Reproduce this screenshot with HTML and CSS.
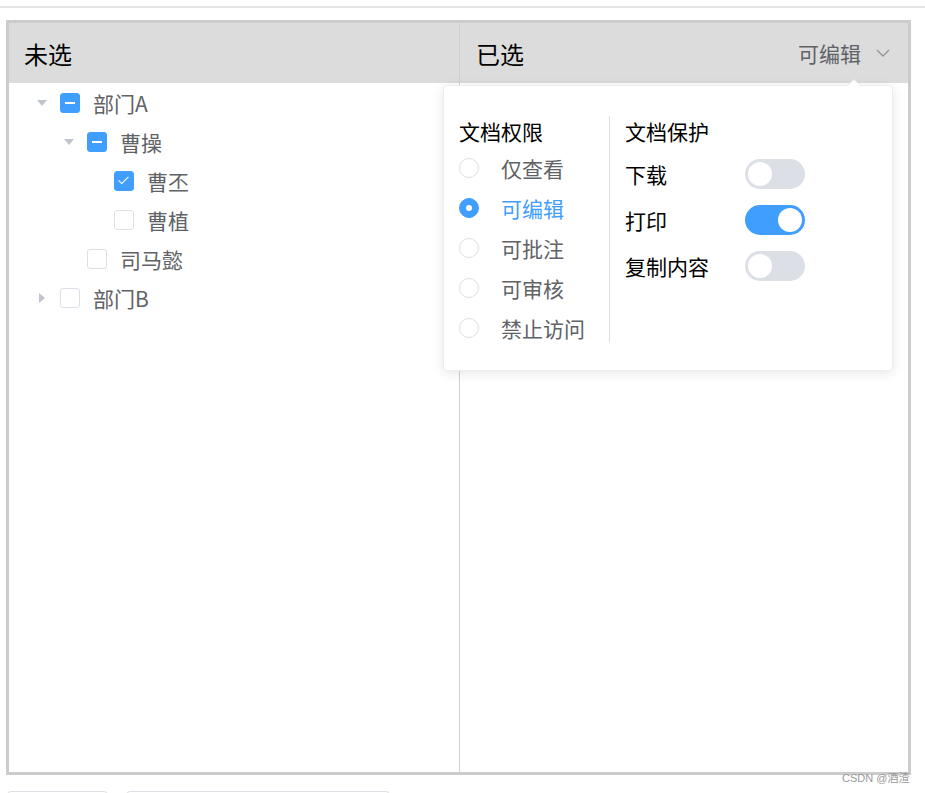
FILE: index.html
```html
<!DOCTYPE html>
<html lang="zh-CN">
<head>
    <meta charset="UTF-8">
    <meta name="viewport" content="width=device-width, initial-scale=1.0">
    <title>权限设置</title>
    <link rel="stylesheet" href="styles.css">
</head>
<body>
    <div class="topbar"></div>

    <div class="transfer">
        <div class="panel left">
            <div class="panel-head">
                <span class="head-title">未选</span>
            </div>
            <ul class="tree">
                <li class="node lv0"><span class="caret open"></span><span class="cb half"></span><span class="label">部门A</span></li>
                <li class="node lv1"><span class="caret open"></span><span class="cb half"></span><span class="label">曹操</span></li>
                <li class="node lv2"><span class="caret none"></span><span class="cb checked"></span><span class="label">曹丕</span></li>
                <li class="node lv2"><span class="caret none"></span><span class="cb"></span><span class="label">曹植</span></li>
                <li class="node lv1"><span class="caret none"></span><span class="cb"></span><span class="label">司马懿</span></li>
                <li class="node lv0"><span class="caret"></span><span class="cb"></span><span class="label">部门B</span></li>
            </ul>
        </div>

        <div class="panel right">
            <div class="panel-head">
                <span class="head-title">已选</span>
                <span class="picker">可编辑
                    <svg class="chev" width="14" height="8" viewBox="0 0 14 8"><path d="M1 1 L7 7 L13 1" fill="none" stroke="#909399" stroke-width="1.3"/></svg>
                </span>
            </div>
        </div>

        <div class="popover">
            <div class="pop-arrow"></div>
            <div class="pop-col perm">
                <div class="pop-title">文档权限</div>
                <label class="radio"><span class="dot"></span>仅查看</label>
                <label class="radio on"><span class="dot"></span>可编辑</label>
                <label class="radio"><span class="dot"></span>可批注</label>
                <label class="radio"><span class="dot"></span>可审核</label>
                <label class="radio"><span class="dot"></span>禁止访问</label>
            </div>
            <div class="pop-divider"></div>
            <div class="pop-col protect">
                <div class="pop-title">文档保护</div>
                <div class="sw-row"><span class="sw-label">下载</span><span class="switch"></span></div>
                <div class="sw-row"><span class="sw-label">打印</span><span class="switch on"></span></div>
                <div class="sw-row"><span class="sw-label">复制内容</span><span class="switch"></span></div>
            </div>
        </div>
    </div>

    <div class="footer">
        <button class="btn small"></button>
        <button class="btn wide"></button>
    </div>

    <div class="watermark">CSDN @酒渣</div>
</body>
</html>
```

FILE: styles.css
```css
body{
    margin: 0;
    font-family: "Noto Sans CJK SC", "Microsoft YaHei", sans-serif;
    background: #fff;
    position: relative;
}
.topbar{
    height: 6px;
    border-bottom: 2px solid #e6e6e6;
}

.transfer{
    position: relative;
    display: flex;
    box-sizing: border-box;
    width: 905px;
    height: 755px;
    margin: 12px 0 0 6px;
    border: 3px solid #cccccc;
}
.panel.left{
    width: 450px;
}
.panel.right{
    flex: 1;
    border-left: 1px solid #d0d0d0;
}
.panel-head{
    height: 60px;
    background: #dcdcdc;
    display: flex;
    align-items: center;
    justify-content: space-between;
    padding: 0 18px 0 15px;
}
.panel.right .panel-head{
    padding-left: 16px;
}
.head-title{
    font-size: 24px;
    color: #000;
}
.picker{
    display: flex;
    align-items: center;
    font-size: 21px;
    color: #606266;
}
.chev{
    margin-left: 15px;
}

/* tree */
.tree{
    list-style: none;
    margin: 0;
    padding: 0;
}
.node{
    height: 39px;
    display: flex;
    align-items: center;
    padding-left: 21px;
    font-size: 21px;
    color: #606266;
}
.node.lv1{ padding-left: 48px; }
.node.lv2{ padding-left: 75px; }
.caret{
    width: 24px;
    height: 24px;
    display: flex;
    align-items: center;
    justify-content: center;
}
.caret::before{
    content: "";
    border-left: 6px solid #c0c4cc;
    border-top: 5px solid transparent;
    border-bottom: 5px solid transparent;
}
.caret.open::before{
    transform: rotate(90deg);
}
.caret.none::before{
    display: none;
}
.cb{
    box-sizing: border-box;
    width: 20px;
    height: 20px;
    margin-left: 6px;
    border: 1px solid #dcdfe6;
    border-radius: 3px;
    background: #fff;
    position: relative;
}
.cb.half, .cb.checked{
    background: #409eff;
    border-color: #409eff;
}
.cb.half::after{
    content: "";
    position: absolute;
    left: 4px;
    right: 4px;
    top: 8px;
    height: 2px;
    background: #fff;
}
.cb.checked::after{
    content: "";
    position: absolute;
    left: 6px;
    top: 2px;
    width: 4px;
    height: 9px;
    border: solid #fff;
    border-width: 0 1px 1px 0;
    transform: rotate(45deg);
}
.label{
    margin-left: 13px;
}

/* popover */
.popover{
    position: absolute;
    left: 434px;
    top: 62px;
    width: 450px;
    height: 286px;
    box-sizing: border-box;
    padding: 30px 15px 0 15px;
    background: #fff;
    border: 1px solid #ebeef5;
    border-radius: 4px;
    box-shadow: 0 2px 12px 0 rgba(0, 0, 0, .1);
    display: flex;
    align-items: flex-start;
}
.pop-arrow{
    position: absolute;
    left: 404px;
    top: -7px;
    width: 0;
    height: 0;
    border-left: 6px solid transparent;
    border-right: 6px solid transparent;
    border-bottom: 6px solid #ebeef5;
}
.pop-arrow::after{
    content: "";
    position: absolute;
    left: -6px;
    top: 1px;
    border-left: 6px solid transparent;
    border-right: 6px solid transparent;
    border-bottom: 6px solid #fff;
}
.pop-title{
    font-size: 21px;
    line-height: 30px;
    color: #000;
}
.pop-col.perm{
    width: 150px;
}
.pop-col.perm .pop-title{
    margin-bottom: 2px;
}
.pop-divider{
    width: 1px;
    height: 226px;
    background: #dcdfe6;
}
.pop-col.protect{
    padding-left: 15px;
}
.pop-col.protect .pop-title{
    margin-bottom: 5px;
}

.radio{
    height: 40px;
    display: flex;
    align-items: center;
    font-size: 21px;
    color: #606266;
}
.dot{
    box-sizing: border-box;
    width: 20px;
    height: 20px;
    border: 1px solid #dcdfe6;
    border-radius: 50%;
    margin-right: 22px;
    position: relative;
}
.radio.on{
    color: #409eff;
}
.radio.on .dot{
    background: #409eff;
    border-color: #409eff;
}
.radio.on .dot::after{
    content: "";
    position: absolute;
    left: 6px;
    top: 6px;
    width: 6px;
    height: 6px;
    border-radius: 50%;
    background: #fff;
}

.sw-row{
    height: 46px;
    display: flex;
    align-items: center;
}
.sw-label{
    width: 120px;
    font-size: 21px;
    color: #000;
}
.switch{
    width: 60px;
    height: 30px;
    border-radius: 15px;
    background: #dcdfe6;
    position: relative;
}
.switch::after{
    content: "";
    position: absolute;
    left: 3px;
    top: 3px;
    width: 24px;
    height: 24px;
    border-radius: 50%;
    background: #fff;
}
.switch.on{
    background: #409eff;
}
.switch.on::after{
    left: 33px;
}

.footer{
    display: flex;
    gap: 18px;
    margin: 16px 0 0 7px;
}
.btn{
    height: 40px;
    background: #fff;
    border: 1px solid #dcdfe6;
    border-radius: 4px;
}
.btn.small{ width: 101px; }
.btn.wide{ width: 264px; }

.watermark{
    position: absolute;
    left: 842px;
    top: 769px;
    font-family: "Liberation Sans", "Noto Sans CJK SC", sans-serif;
    font-size: 11px;
    color: #9a9a9a;
}
```
